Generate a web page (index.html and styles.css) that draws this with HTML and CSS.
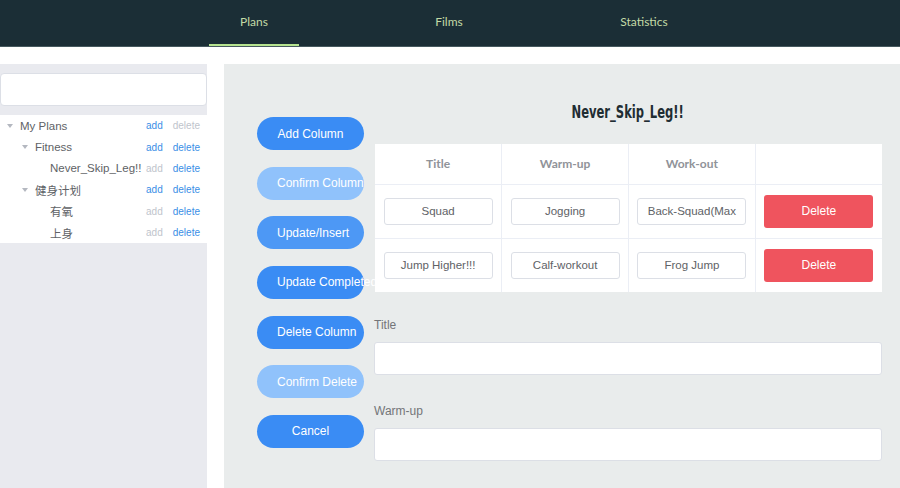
FILE: index.html
```html
<!DOCTYPE html>
<html lang="en">
<head>
<meta charset="utf-8">
<title>Plans</title>
<link rel="stylesheet" href="styles.css">
</head>
<body>
<header class="topnav">
  <a class="nav-item active">Plans</a>
  <a class="nav-item">Films</a>
  <a class="nav-item">Statistics</a>
</header>
<div class="page">
  <aside class="sidebar">
    <input class="search" type="text">
    <ul class="tree">
      <li class="node lvl0"><span class="caret"></span><span class="label">My Plans</span><span class="acts"><span class="act on">add</span><span class="act off">delete</span></span></li>
      <li class="node lvl1"><span class="caret"></span><span class="label">Fitness</span><span class="acts"><span class="act on">add</span><span class="act on">delete</span></span></li>
      <li class="node lvl2"><span class="caret none"></span><span class="label">Never_Skip_Leg!!</span><span class="acts"><span class="act off">add</span><span class="act on">delete</span></span></li>
      <li class="node lvl1"><span class="caret"></span><span class="label">健身计划</span><span class="acts"><span class="act on">add</span><span class="act on">delete</span></span></li>
      <li class="node lvl2"><span class="caret none"></span><span class="label">有氧</span><span class="acts"><span class="act off">add</span><span class="act on">delete</span></span></li>
      <li class="node lvl2"><span class="caret none"></span><span class="label">上身</span><span class="acts"><span class="act off">add</span><span class="act on">delete</span></span></li>
    </ul>
  </aside>
  <div class="spacer"></div>
  <main class="main">
    <div class="btn-col">
      <button class="pill">Add Column</button>
      <button class="pill light">Confirm Column</button>
      <button class="pill mid">Update/Insert</button>
      <button class="pill">Update Completed</button>
      <button class="pill">Delete Column</button>
      <button class="pill light">Confirm Delete</button>
      <button class="pill">Cancel</button>
    </div>
    <div class="content">
      <div class="title-row"><h1 class="plan-title">Never_Skip_Leg!!</h1></div>
      <table class="grid">
        <thead>
          <tr><th>Title</th><th>Warm-up</th><th>Work-out</th><th></th></tr>
        </thead>
        <tbody>
          <tr>
            <td><input class="cell-input" value="Squad"></td>
            <td><input class="cell-input" value="Jogging"></td>
            <td><input class="cell-input" value="Back-Squad(Max"></td>
            <td><button class="del">Delete</button></td>
          </tr>
          <tr>
            <td><input class="cell-input" value="Jump Higher!!!"></td>
            <td><input class="cell-input" value="Calf-workout"></td>
            <td><input class="cell-input" value="Frog Jump"></td>
            <td><button class="del">Delete</button></td>
          </tr>
        </tbody>
      </table>
      <div class="field">
        <label class="field-label">Title</label>
        <input class="field-input" type="text">
      </div>
      <div class="field second">
        <label class="field-label">Warm-up</label>
        <input class="field-input" type="text">
      </div>
    </div>
  </main>
</div>
</body>
</html>
```
FILE: styles.css
```css
* { box-sizing: border-box; }
html, body { margin: 0; padding: 0; }
body {
  width: 900px;
  height: 488px;
  overflow: hidden;
  background: #fff;
  font-family: "Liberation Sans", "Noto Sans CJK SC", sans-serif;
}

.topnav {
  height: 47px;
  background: #1b2e36;
  border-bottom: 1px solid #46595f;
  display: flex;
  padding-left: 209px;
  gap: 105px;
}
.nav-item {
  width: 90px;
  height: 46px;
  line-height: 44px;
  text-align: center;
  color: #c3dba6;
  font-family: "Lato", "Liberation Sans", sans-serif;
  font-size: 12px;
}
.nav-item.active { box-shadow: inset 0 -2px 0 #b6e38f; }

.page {
  margin-top: 17px;
  display: flex;
  height: 424px;
}
.sidebar {
  flex: 0 0 207px;
  width: 207px;
  background: #e9eaef;
  padding-top: 9px;
}
.spacer { flex: 0 0 17px; background: #fff; }
.search {
  display: block;
  width: 207px;
  height: 33px;
  border: 1px solid #dcdfe6;
  border-radius: 4px;
  background: #fff;
  margin: 0;
}
.tree {
  list-style: none;
  margin: 9px 0 0;
  padding: 0;
  background: #fff;
}
.node {
  display: flex;
  align-items: center;
  height: 21.4px;
  font-size: 11.5px;
  color: #606266;
  padding-right: 7px;
}
.lvl0 { padding-left: 7px; }
.lvl1 { padding-left: 22px; }
.lvl2 { padding-left: 37px; }
.caret {
  flex: 0 0 13px;
  width: 13px;
  height: 4px;
  position: relative;
}
.caret::before {
  content: "";
  position: absolute;
  left: 0;
  top: 0;
  border-left: 3px solid transparent;
  border-right: 3px solid transparent;
  border-top: 4px solid #b4b8c0;
}
.caret.none::before { display: none; }
.label { flex: 1; white-space: nowrap; }
.acts { display: flex; gap: 10px; font-size: 10px; flex-shrink: 0; }
.act.on { color: #3a8ee6; }
.act.off { color: #c0c4cc; }

.main {
  flex: 1;
  background: #e9ecec;
  display: flex;
  padding: 0 18px 0 33px;
  gap: 10px;
  min-width: 0;
}
.btn-col {
  flex: 0 0 107px;
  width: 107px;
  padding-top: 53px;
  display: flex;
  flex-direction: column;
  gap: 16.67px;
}
.pill {
  display: block;
  width: 107px;
  height: 33px;
  border: none;
  border-radius: 17px;
  background: #3a8cf4;
  color: #fff;
  font-family: "Liberation Sans", sans-serif;
  font-size: 12px;
  padding: 0 20px;
  text-align: center;
  white-space: nowrap;
  overflow: visible;
  margin: 0;
}
.pill.mid { background: #4d98f5; }
.pill.light { background: #90c2fb; }

.content { flex: 1; }
.title-row {
  margin: 36px 0 20px;
  height: 24px;
  text-align: center;
}
.plan-title {
  display: inline-block;
  margin: 0;
  line-height: 24px;
  font-family: "DejaVu Sans", sans-serif;
  font-weight: bold;
  font-size: 17px;
  color: #1f2d33;
  transform: scaleX(0.68);
}
.grid {
  width: 507px;
  margin-left: 1px;
  border-collapse: collapse;
  background: #fff;
  table-layout: fixed;
}
.grid th, .grid td {
  border: 1px solid #ebeef5;
  padding: 0;
  text-align: center;
}
.grid tr > :first-child { border-left: none; }
.grid tr > :last-child { border-right: none; }
.grid thead tr > * { border-top: none; }
.grid tbody tr:last-child td { border-bottom: none; }
.grid th {
  height: 40px;
  font-family: "Lato", sans-serif;
  font-weight: bold;
  font-size: 12px;
  color: #909399;
}
.grid td { height: 54px; }
.cell-input {
  width: 109px;
  height: 27px;
  border: 1px solid #dcdfe6;
  border-radius: 3px;
  text-align: center;
  font-family: "Liberation Sans", sans-serif;
  font-size: 11.5px;
  color: #606266;
  padding: 0 4px;
  margin: 0;
}
.del {
  width: 109px;
  height: 33px;
  border: none;
  border-radius: 3px;
  background: #ef545e;
  color: #fff;
  font-family: "Liberation Sans", sans-serif;
  font-size: 12px;
  margin: 0;
}
.field { margin-top: 25px; }
.field.second { margin-top: 28px; }
.field-label {
  display: block;
  line-height: 16px;
  font-size: 12px;
  color: #737578;
  margin-bottom: 9px;
}
.field-input {
  display: block;
  width: 508px;
  height: 33px;
  border: 1px solid #dcdfe6;
  border-radius: 3px;
  background: #fff;
  margin: 0;
}
```
